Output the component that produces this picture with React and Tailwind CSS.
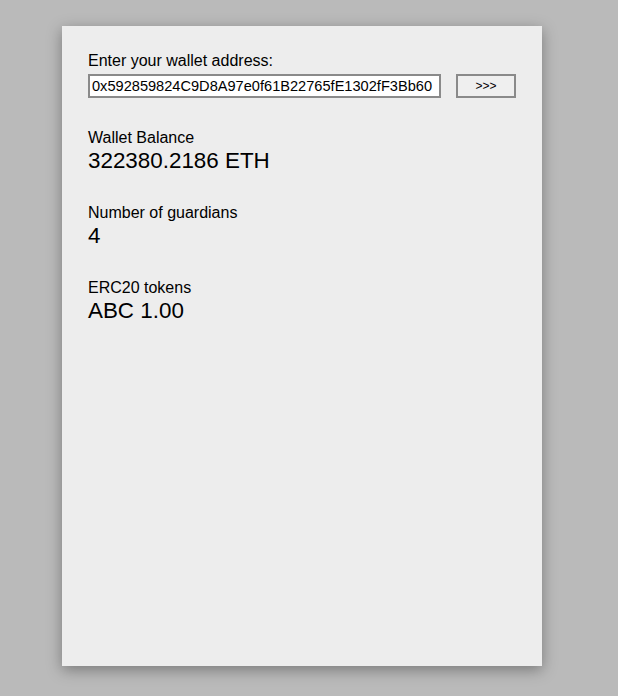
export default function App() {
  const sections = [
    { label: 'Wallet Balance', value: '322380.2186 ETH' },
    { label: 'Number of guardians', value: '4' },
    { label: 'ERC20 tokens', value: 'ABC 1.00' },
  ];

  return (
    <div className="min-h-[696px] bg-[#bababa] pt-[26px] font-['Liberation_Sans',Arial,sans-serif] text-black">
      <div className="ml-[62px] w-[480px] h-[640px] bg-[#ededed] shadow-[0_4px_14px_rgba(0,0,0,0.35)] px-[26px] pt-[24px]">
        <div className="text-[16px] leading-[22px]">Enter your wallet address:</div>
        <div className="flex items-center mt-[2px]">
          <input
            readOnly
            value="0x592859824C9D8A97e0f61B22765fE1302fF3Bb60"
            className="w-[353px] h-[24px] bg-white border-2 border-[#8a8a8a] pl-[2px] pr-0 text-[14.6px] outline-none"
          />
          <button className="ml-[15px] w-[60px] h-[24px] border-2 border-[#8a8a8a] bg-[#efefef] text-[12px]">
            &gt;&gt;&gt;
          </button>
        </div>
        <div className="mt-[30px] flex flex-col gap-[30px]">
          {sections.map((s) => (
            <div key={s.label}>
              <div className="text-[16px] leading-[20px]">{s.label}</div>
              <div className="text-[22.4px] leading-[25px]">{s.value}</div>
            </div>
          ))}
        </div>
      </div>
    </div>
  );
}
